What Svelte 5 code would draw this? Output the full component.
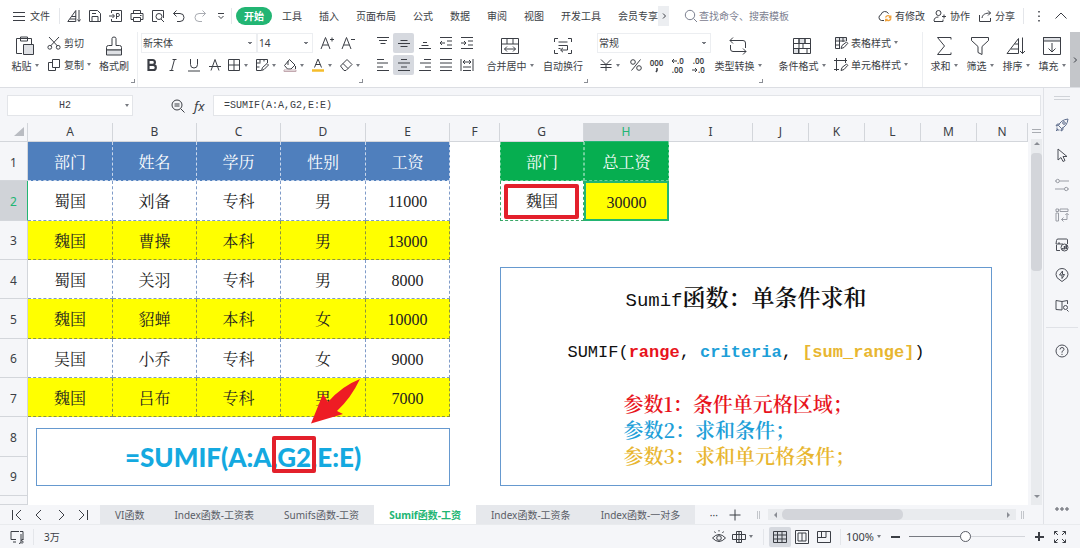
<script lang="ts">
	// name: [box size, svg body]
	const icons: Record<string, [number, string]> = {
		menu: [14, '<path d="M1 3.5h12M1 7.5h12M1 11.5h12"/>'],
		sortDoc: [14, '<path d="M.8 12.5h8V1.5zM5 7.5h4M3 10h6M12 1v11M10.5 10.5l1.5 2 1.5-2"/>'],
		save: [14, '<path d="M1.5 1.5h8l3 3v8h-11zM4 12.5v-5h6v5M4 4.5h4"/>'],
		exportDoc: [14, '<path d="M2.5 4V1.5h10v11h-10V10M0 7h5M3.5 5L5.5 7l-2 2M7.5 10V4.500h2.200q1.500 1.500 0 3H7.500"/>'],
		print: [14, '<path d="M3.500 4V1.500h7V4M3.500 10.500h-2.500V4.500h12v6h-2.500M3.500 8.500h7v4h-7zM10 6.500h1.500"/>'],
		preview: [14, '<path d="M6 12.500H1.500v-11h11V9M13 13l-3-3"/><circle cx="8" cy="7.500" r="3"/>'],
		undo: [14, '<path d="M4.500 1.500L1.500 4.500l3 3M1.500 4.500H8a4 4 0 0 1 0 8H5"/>'],
		redo: [14, '<path stroke="#a9acb2" d="M9.500 1.500l3 3-3 3M12.500 4.500H6a4 4 0 0 0 0 8h3"/>'],
		more: [14, '<path d="M4 4.500h6M4.500 7L7 9.500 9.500 7"/>'],
		search: [14, '<circle cx="6" cy="6" r="4.700"/><path d="M9.500 9.500L13 13"/>'],
		cloud: [14, '<path d="M6 11.500H3.500a3 3 0 0 1-.5-5.800 4 4 0 0 1 7.500-1"/><path stroke="#f0a13a" stroke-width="1.300" d="M7.500 8.500a2.800 2.800 0 0 1 5-.5M13 9.500a2.800 2.800 0 0 1-5 .8M12.800 6.500v2h-2M7.700 12.500v-2h2"/>'],
		person: [14, '<circle cx="5.500" cy="4" r="2.500"/><path d="M1 12c0-3 2-4 4.500-4M1 12.500h9v-2M9 7.500h4M11 5.500v4"/>'],
		share: [14, '<path d="M1.500 6v6.500h11V9M4 9c.5-3.500 3-5 8.500-5M10 1.500L12.500 4 10 6.500"/>'],
		dots: [14, '<path stroke-width="1.500" d="M7 2v1.500M7 6.500V8M7 11v1.500"/>'],
		up: [14, '<path d="M1.500 9.500L7 4l5.500 5.500"/>'],
		chevRight: [8, '<path d="M3 1.500L5.500 4 3 6.500"/>'],
		paste: [20, '<path d="M7 17.500H1.500v-15h15V8M5.500 1h7v4h-7z"/><path fill="#dfe1e5" d="M8.500 8.500h10v10h-10z"/>'],
		cut: [14, '<path d="M2 1l8.500 9M12 1L3.500 10"/><circle cx="2.800" cy="11.300" r="1.900"/><circle cx="11.200" cy="11.300" r="1.900"/>'],
		copy: [14, '<path d="M5.500 1.500h7v8h-7zM5.500 4.500h-4v8h7v-3"/>'],
		brush: [20, '<path d="M8 9.500V2.500q0-1.500 2-1.500t2 1.500v7M8 9.500H4.500q-2 0-2 2V14h15v-2.500q0-2-2-2H12"/><path fill="#dfe1e5" d="M2.500 14h15v5h-15z"/>'],
		fontUp: [14, '<path d="M1 13L5.500 1.500 10 13M2.700 9h5.600M10 3.500h4M12 1.500v4"/>'],
		fontDown: [14, '<path d="M1 13L5.500 1.500 10 13M2.700 9h5.600M10 3.500h4"/>'],
		bold: [14, '<path stroke-width="2.200" d="M3.500 2h4a2.300 2.300 0 0 1 0 4.800h-4zM3.500 6.800h4.700a2.500 2.500 0 0 1 0 5.200H3.500z"/>'],
		italic: [14, '<path d="M6.500 1.500h4M3.500 12.500h4M8.500 1.500l-3 11"/>'],
		underline: [14, '<path d="M3.500 1v5.500a3.500 3.500 0 0 0 7 0V1M1 13h12"/>'],
		strike: [14, '<path d="M3 12.500L7 1.500l4 11M1 8.500h12"/>'],
		border: [14, '<path d="M1.500 1.500h11v11h-11zM7 1.500v11M1.500 7h11"/>'],
		cellPen: [14, '<path d="M6 12.500H1.500v-11h11V5M1.500 5h4M1.500 9h3M5 1.500v3M9 1.500v2M6.500 12.500l1-3L12 5.500l1.500 1.500-4.500 4.500z"/>'],
		fill: [14, '<path d="M6.500 1.500l5.500 5.500-4 4H4.500L1.500 7.500zM5 3v4M12.500 8v3"/><path fill="#fff" stroke="#c3a9b0" d="M1 12h12v1.500H1z"/>'],
		fontColor: [14, '<path d="M3.500 9.500L7 1l3.500 8.500M4.700 6.500h4.600"/><path stroke="#f5bd2c" stroke-width="2.500" d="M1 12.500h12"/>'],
		eraser: [14, '<path d="M1.500 8L8 1.500 13 6.500l-6 6H5zM4 5.500l5 5"/>'],
		top: [14, '<path d="M1 1.500h12M3 4.500h8M4.500 7.500h5"/>'],
		middle: [14, '<path d="M3.500 4.500h7M1 7.500h12M3.500 10.500h7"/>'],
		bottom: [14, '<path d="M5 6.500h4M3.500 9.500h7M1 12.500h12"/>'],
		indentLess: [14, '<path d="M1 1.500h12M8 5h5M8 9h5M1 12.500h12M6 7H1M3 5L1 7l2 2"/>'],
		indentMore: [14, '<path d="M1 1.500h12M8 5h5M8 9h5M1 12.500h12M1 7h5M4 5l2 2-2 2"/>'],
		left: [14, '<path d="M1 1.500h7M1 5h11M1 9h6M1 12.500h12"/>'],
		center: [14, '<path d="M4 1.500h6M1 5h12M4 9h6M1 12.500h12"/>'],
		right: [14, '<path d="M6 1.500h7M2 5h11M7 9h6M1 12.500h12"/>'],
		justify: [14, '<path d="M1 1.500h12M1 5h12M1 9h12M1 12.500h12"/>'],
		distribute: [14, '<path d="M1 1v12M13 1v12M3 4h8M5 2L3 4l2 2M9 2l2 2-2 2M3 9h8M3 12.500h8"/>'],
		merge: [20, '<path d="M1.500 2.500h17v15h-17zM1.500 8h17M7 2.500V8M13 2.500V8M4.500 13h11M7 10.500L4.500 13 7 15.500M13 10.500l2.500 2.500-2.500 2.500"/>'],
		wrap: [20, '<path d="M5 2.500H1.500V6M15 2.500h3.500V6M5 17.500H1.500V14M15 17.500h3.500V14M5.500 6h9M5.500 9.500h9V14H8M10 11.800L7.500 14l2.500 2.200M5.500 12.500h2"/>'],
		yen: [14, '<path d="M2 1.500l5 5 5-5M1.500 6.500h11M1.500 9.500h11M7 6.500v6.500"/>'],
		percent: [14, '<circle cx="4" cy="4" r="2.300"/><circle cx="10" cy="10" r="2.300"/><path d="M11.500 1.500l-9 11"/>'],
		convert: [20, '<path d="M2 4.500h13q2.500 0 2.500 2.500v5M5 1.500l-3 3 3 3M18 15.500H5q-2.500 0-2.500-2.500V9M15 12.500l3 3-3 3"/>'],
		condition: [20, '<path fill="#dfe1e5" d="M7 2.500h6v5H7zM1.500 12.500h5v5h-5z"/><path d="M1.500 2.500h17v15h-17zM1.500 7.500h17M1.500 12.500h17M7 2.500v15M13 2.500v5M11 7.500v5M15 12.500v5"/>'],
		tableStyle: [14, '<path fill="#dfe1e5" stroke="none" d="M1 1h11v3H1z"/><path d="M6 12.500H1.500v-11h11V5M1.500 5h10M1.500 9H6M5.500 1.500v11M9 1.500V6M7 12.500l1-3 4.500-3.500 1.300 1.300L10 11.500z"/>'],
		cellStyle: [14, '<path d="M2.500 0v13M0 2.500h13M11.500 0v5M0 11.500h5M7 12.500l1-3 4.500-3.500 1.300 1.300L10 11.500z"/>'],
		sum: [20, '<path d="M17 3.500v-2H3.500l7 8.500-7 8.500H17v-2"/>'],
		filter: [20, '<path d="M1.500 1.500h17v3l-6.500 6v8l-4-2v-6l-6.500-6z"/>'],
		sort: [20, '<path d="M1 17.500h11.500V2.500zM8.500 8h4M5 13h7.500M16.500 1.500v16M14 15l2.500 2.500L19 15"/>'],
		fillDown: [20, '<path fill="#dfe1e5" d="M1.500 1.500h17v3.500h-17z"/><path d="M1.500 1.500h17v17h-17zM10 7v9M6.500 12.500L10 16l3.500-3.500"/>'],
		zoomOut: [14, '<circle cx="6" cy="6" r="5"/><path d="M3.500 5h5M3.500 7h5M9.800 9.800L13.500 13.500"/>'],
		rocket: [14, '<path d="M5 9L3.500 7.500C5 4 8 1.500 13 1c-.5 5-3 8-6.500 9.500zM4.500 6L2 6.200 1 8l2.500-.5M8 9.500L7.800 12 6 13l.5-2.500M2 9.500v2.500h2.500M1 13l2-2"/><circle cx="9" cy="5" r="1.300"/>'],
		cursor: [14, '<path d="M3 1l9 7.500H8L10 12.500l-2 1-2-4-3 2.500z"/>'],
		sliders: [14, '<path d="M0 3h1M4.500 3H14M0 11h9.500M13 11h1"/><circle cx="2.700" cy="3" r="1.700"/><circle cx="11.200" cy="11" r="1.700"/>'],
		pivot: [14, '<path d="M1 1h2.500v2.500H1zM5 1h8v2.500H5zM1 5h2.500v8H1zM12 5.500v6H6.500M8.500 9.500l-2 2 2 2M10.300 7L12 5.300 13.700 7"/>'],
		shop: [14, '<path d="M5 12.500H1.500V7M12.500 6V2q0-1-1-1H3Q1.500 1 1.500 2.500L1 6h3V4.500V6h4"/><circle cx="9.500" cy="9.500" r="3.500"/><path d="M9.500 8v3.500M11.300 7v4M7.800 10v1.500" stroke-width="1.500"/>'],
		idea: [14, '<path d="M5 12Q1 10 1 6.500a6 6 0 0 1 12 0Q13 10 9 12l-2 1.500zM7.500 3L4.500 7H7v3.500l2.500-4H7.500z"/>'],
		book: [14, '<path d="M7 12L1 11.500v-9L7 3.500l5.500-1V6M7 3.500V12M12 12l1.500 1.500"/><circle cx="10.500" cy="9.500" r="2"/>'],
		help: [14, '<circle cx="7" cy="7" r="6"/><path d="M5 5.500q0-2 2-2t2 1.800Q9 6.500 7 7.500v1.200M7 9.800V11"/>'],
		ellipsis: [14, '<circle cx="2" cy="7" r="1.200"/><circle cx="7" cy="7" r="1.200"/><circle cx="12" cy="7" r="1.200"/>'],
		first: [14, '<path d="M2.500 2v10M11 2L6 7l5 5"/>'],
		prev: [14, '<path d="M9 2L4 7l5 5"/>'],
		next: [14, '<path d="M5 2l5 5-5 5"/>'],
		last: [14, '<path d="M11.500 2v10M3 2l5 5-5 5"/>'],
		plus: [14, '<path d="M7 1.500v11M1.500 7h11"/>'],
		macro: [14, '<path d="M6 9.500H1v-8h8M3 12h3M10 1.500h3v8M11 4v8q0 1.500-2 1.500M13.500 9.500q-2.500-.5-2 1.200 2 .5 1.700 1.700-.7 1-2 .5"/>'],
		eye: [14, '<path d="M.5 8q6.500-7 13 0-6.500 7-13 0zM7 0v1.500M2.500 1.500l1 1.500M11.500 1.500l-1 1.500"/><circle cx="7" cy="8" r="2.300"/>'],
		cross: [14, '<path d="M4.500 1.500h5v11h-5zM.5 4.500h13v5H.5zM7 1.500v11"/>'],
		grid: [14, '<path d="M.5 1.500h13v11H.5zM.5 5h13M.5 9h13M4.500 1.500v11M9 1.500v11"/>'],
		page: [14, '<path d="M.5 .5h13v13H.5zM3 3h8v8H3zM7 3v8"/>'],
		layout: [14, '<path d="M.5 1.500h13v11H.5zM4.500 1.500v6M9 1.500v6M.5 7.500H9"/>'],
		full: [14, '<path d="M9 5l3.500-3.500M9.500 1.500h3v3M5 9l-3.500 3.500M1.500 9.500v3h3M5 5L1.500 1.500M1.500 4.500v-3h3M9 9l3.500 3.500M12.500 9.500v3h-3"/>'],
		comma: [6, '<path stroke-width="1.500" d="M3 1v2.500L2 5"/>'],
		arrowLeft: [6, '<path d="M6 3H1M3 1L1 3l2 2"/>'],
		arrowRight: [6, '<path d="M0 3h5M3 1l2 2-2 2"/>']
	};

	const quick = ['sortDoc', 'save', 'exportDoc', 'print', 'preview', 'undo', 'redo', 'more'];
	const menus = ['工具', '插入', '页面布局', '公式', '数据', '审阅', '视图', '开发工具', '会员专享'];
	const aligns = ['top', 'middle', 'bottom', 'indentLess', 'indentMore', 'left', 'center', 'right', 'justify', 'distribute'];
	const side = ['rocket', 'cursor', 'sliders', 'pivot', 'shop', 'idea', 'book'];
	const columns = 'ABCDEFGHIJKLMN'.split('');
	const rows = [
		['部门', '姓名', '学历', '性别', '工资'],
		['蜀国', '刘备', '专科', '男', '11000'],
		['魏国', '曹操', '本科', '男', '13000'],
		['蜀国', '关羽', '专科', '男', '8000'],
		['魏国', '貂蝉', '本科', '女', '10000'],
		['吴国', '小乔', '专科', '女', '9000'],
		['魏国', '吕布', '专科', '男', '7000'],
		[],
		[]
	];
	const lookup = [
		['部门', '总工资'],
		['魏国', '30000']
	];
	const sheets = ['VI函数', 'Index函数-工资表', 'Sumifs函数-工资', 'Sumif函数-工资', 'Index函数-工资条', 'Index函数-一对多'];

	let formula = $state('=SUMIF(A:A,G2,E:E)');
	let cellName = $state('H2');
	let activeSheet = $state(3);
	let zoom = $state(49);

	function cellText(r: number, c: number) {
		if (c < 5) return rows[r][c] ?? '';
		if (c === 6 || c === 7) return lookup[r]?.[c - 6] ?? '';
		return '';
	}

	function cellClass(r: number, c: number) {
		if (c < 5 && r < 7) return r === 0 ? 'data head' : r % 2 === 0 ? 'data mark' : 'data';
		if ((c === 6 || c === 7) && r < 2) {
			if (r === 0) return 'look look-head';
			return c === 7 ? 'look selected' : 'look';
		}
		return '';
	}
</script>

{#snippet icon(name: string)}
	<svg
		class="icon"
		width={icons[name][0]}
		height={icons[name][0]}
		viewBox="0 0 {icons[name][0]} {icons[name][0]}"
		aria-hidden="true">{@html icons[name][1]}</svg
	>
{/snippet}

{#snippet big(name: string, label: string, caret: boolean)}
	<button class="big" type="button">
		{@render icon(name)}
		<span class="label">{label}{#if caret}<i class="caret"></i>{/if}</span>
	</button>
{/snippet}

{#snippet small(name: string, label: string, caret: boolean)}
	<button class="small" type="button">
		{@render icon(name)}
		<span class="label">{label}{#if caret}<i class="caret"></i>{/if}</span>
	</button>
{/snippet}

{#snippet tool(name: string)}
	<button class="tool" type="button" aria-label={name}>{@render icon(name)}</button>
{/snippet}

{#snippet drop(name: string)}
	<button class="drop" type="button" aria-label={name}>{@render icon(name)}<i class="caret"></i></button>
{/snippet}

<div class="app">
	<header>
		<div class="menubar">
			<button class="file" type="button">{@render icon('menu')}文件</button>
			<span class="rule"></span>
			<div class="quick">
				{#each quick as name}
					{@render tool(name)}
				{/each}
			</div>
			<span class="rule"></span>
			<nav class="menus">
				<button class="pill" type="button">开始</button>
				{#each menus as label}
					<button type="button">{label}</button>
				{/each}
				<button class="menu-next" type="button" aria-label="next">{@render icon('chevRight')}</button>
			</nav>
			<label class="search">
				{@render icon('search')}
				<input type="text" placeholder="查找命令、搜索模板" aria-label="查找命令、搜索模板" />
			</label>
			<div class="account">
				<button type="button">{@render icon('cloud')}有修改</button>
				<button type="button">{@render icon('person')}协作</button>
				<button type="button">{@render icon('share')}分享</button>
				<span class="rule"></span>
				<button type="button" aria-label="more">{@render icon('dots')}</button>
				<button type="button" aria-label="collapse">{@render icon('up')}</button>
			</div>
		</div>

		<div class="ribbon">
			<div class="group clipboard corner">
				{@render big('paste', '粘贴', true)}
				<div class="stack">
					{@render small('cut', '剪切', false)}
					{@render small('copy', '复制', true)}
				</div>
				{@render big('brush', '格式刷', false)}
			</div>
			<div class="group font corner">
				<div class="stack">
					<div class="line">
						<select class="family" aria-label="font"><option>新宋体</option></select>
						<select class="size" aria-label="size"><option>14</option></select>
						{@render tool('fontUp')}
						{@render tool('fontDown')}
					</div>
					<div class="line">
						{@render tool('bold')}
						{@render tool('italic')}
						{@render tool('underline')}
						{@render tool('strike')}
						{@render drop('border')}
						{@render drop('cellPen')}
						{@render drop('fill')}
						{@render drop('fontColor')}
						{@render drop('eraser')}
					</div>
				</div>
			</div>
			<div class="group align corner">
				<div class="align-grid">
					{#each aligns as name}
						<button class="tool" class:on={name === 'middle' || name === 'center'} type="button" aria-label={name}>
							{@render icon(name)}
						</button>
					{/each}
				</div>
				{@render big('merge', '合并居中', true)}
				{@render big('wrap', '自动换行', false)}
			</div>
			<div class="group number corner">
				<div class="stack">
					<div class="line">
						<select class="format" aria-label="format"><option>常规</option></select>
					</div>
					<div class="line">
						{@render drop('yen')}
						{@render tool('percent')}
						<button class="tool digits" type="button">
							<span>000</span>
							{@render icon('comma')}
						</button>
						<button class="tool digits" type="button">
							<span>{@render icon('arrowLeft')}.0</span>
							<span>.00</span>
						</button>
						<button class="tool digits" type="button">
							<span>.00</span>
							<span>{@render icon('arrowRight')}.0</span>
						</button>
					</div>
				</div>
				{@render big('convert', '类型转换', true)}
			</div>
			<div class="group styles">
				{@render big('condition', '条件格式', true)}
				<div class="stack">
					{@render small('tableStyle', '表格样式', true)}
					{@render small('cellStyle', '单元格样式', true)}
				</div>
			</div>
			<div class="group edit">
				{@render big('sum', '求和', true)}
				{@render big('filter', '筛选', true)}
				{@render big('sort', '排序', true)}
				{@render big('fillDown', '填充', true)}
			</div>
			<button class="ribbon-next" type="button" aria-label="scroll ribbon">{@render icon('chevRight')}</button>
		</div>
	</header>

	<div class="body">
		<main>
			<div class="formula-bar">
				<label class="name-box">
					<input type="text" bind:value={cellName} aria-label="cell" />
					<i class="caret"></i>
				</label>
				<div class="fx">
					{@render icon('zoomOut')}
					<em>fx</em>
				</div>
				<input class="formula" type="text" bind:value={formula} aria-label="formula" />
			</div>

			<div class="sheet-row">
				<div class="sheet">
					<table>
						<colgroup>
							<col class="w-head" />
							{#each columns as letter, i}
								<col class={i === 13 ? '' : i > 8 ? 'w-narrow' : i === 5 ? 'w-gap' : i === 0 || i === 3 || i === 7 ? 'w-wide' : 'w-col'} />
							{/each}
						</colgroup>
						<thead>
							<tr>
								<th class="corner-cell"><svg width="10" height="9" aria-hidden="true"><path d="M10 0v9H0z" fill="#b9bcc2" /></svg></th>
								{#each columns as letter}
									<th class:current={letter === 'H'}>{letter}</th>
								{/each}
							</tr>
						</thead>
						<tbody>
							{#each rows as _, r}
								<tr>
									<th class:current={r === 1}>{r + 1}</th>
									{#each columns as _, c}
										<td class={cellClass(r, c)}>{cellText(r, c)}</td>
									{/each}
								</tr>
							{/each}
							<tr class="rest"><th></th><td colspan="14"></td></tr>
						</tbody>
					</table>

					<div class="shape formula-shape">=SUMIF(A:A,G2,E:E)</div>
					<div class="shape note">
						<h2><span>Sumif</span>函数：单条件求和</h2>
						<p>SUMIF(<b class="red">range</b>, <b class="blue">criteria</b>, <b class="gold">[sum_range]</b>)</p>
						<ul>
							<li class="red">参数1：条件单元格区域；</li>
							<li class="blue">参数2：求和条件；</li>
							<li class="gold">参数3：求和单元格条件；</li>
						</ul>
					</div>
					<div class="frame frame-cell"></div>
					<div class="frame frame-arg"></div>
					<svg class="arrow" width="52" height="46" viewBox="0 0 52 46" aria-hidden="true">
						<path fill="#ee1c24" d="M50 1Q41 20 27 33l6 3L1 45.500 13 16l5 8Q32 8 50 1z" />
					</svg>
				</div>
				<div class="v-scroll">
					<div class="split"></div>
					<i class="tri tri-up"></i>
					<div class="v-thumb"></div>
					<i class="tri tri-down"></i>
				</div>
			</div>

			<div class="tabs">
				<div class="tab-nav">
					{@render tool('first')}
					{@render tool('prev')}
					{@render tool('next')}
					{@render tool('last')}
				</div>
				<div class="tab-list">
					{#each sheets as name, i}
						<button type="button" class:active={i === activeSheet} onclick={() => (activeSheet = i)}>{name}</button>
					{/each}
				</div>
				<div class="tab-tools">
					<button class="tool" type="button" aria-label="more sheets">···</button>
					{@render tool('plus')}
				</div>
				<span class="grip"></span>
				<div class="h-scroll">
					<i class="tri tri-left"></i>
					<div class="h-thumb"></div>
					<i class="tri tri-right"></i>
				</div>
				<span class="grip"></span>
			</div>
		</main>

		<aside>
			<div class="handle"></div>
			{#each side as name}
				<button class="side-button {name}" type="button" aria-label={name}>{@render icon(name)}</button>
			{/each}
			<hr />
			<button class="side-button" type="button" aria-label="help">{@render icon('help')}</button>
			<button class="side-button side-more" type="button" aria-label="more panels">{@render icon('ellipsis')}</button>
		</aside>
	</div>

	<footer>
		{@render tool('macro')}
		<span class="rule"></span>
		<span class="total">3万</span>
		<div class="status-tools">
			{@render tool('eye')}
			{@render drop('cross')}
			<span class="rule"></span>
			<button class="tool on" type="button" aria-label="grid view">{@render icon('grid')}</button>
			{@render tool('page')}
			{@render tool('layout')}
			<span class="rule"></span>
			<button class="zoom-value" type="button">100%<i class="caret"></i></button>
			<button class="zoom-step" type="button" aria-label="zoom out"><i class="minus"></i></button>
			<input type="range" min="0" max="100" bind:value={zoom} aria-label="zoom" />
			<button class="zoom-step zoom-in" type="button" aria-label="zoom in"><i class="minus plus"></i></button>
			{@render tool('full')}
		</div>
	</footer>
</div>

<style>
	:global(body) {
		margin: 0;
	}

	.app {
		display: flex;
		flex-direction: column;
		min-height: 100vh;
		overflow: hidden;
		background: #f5f6f9;
		color: #3b3e45;
		font-family: 'Noto Sans', 'Noto Sans CJK SC', sans-serif;
		font-size: 10px;
		line-height: 14px;
	}

	button,
	input,
	select {
		margin: 0;
		padding: 0;
		border: 0;
		background: none;
		color: inherit;
		font: inherit;
		outline: none;
	}

	button {
		display: flex;
		align-items: center;
		justify-content: center;
		white-space: nowrap;
	}

	.icon {
		display: block;
		flex: none;
		fill: none;
		stroke: currentColor;
		stroke-width: 1;
		overflow: visible;
	}

	.caret {
		display: inline-block;
		flex: none;
		margin-left: 3px;
		vertical-align: 3px;
		border: 2px solid transparent;
		border-top: 3px solid #777a81;
		border-bottom: 0;
	}

	.rule {
		width: 1px;
		height: 16px;
		background: #e4e6ea;
	}

	header {
		background: #fff;
		border-bottom: 1px solid #dcdee3;
	}

	.menubar {
		display: flex;
		align-items: center;
		height: 32px;
		padding: 0 12px;
	}

	.file {
		gap: 4px;
		margin-right: 9px;
	}

	.quick {
		display: flex;
		margin: 0 0 0 3px;
	}

	.tool {
		width: 21px;
		height: 20px;
		border-radius: 2px;
	}

	.on {
		background: #d6d9df;
	}

	.menus {
		display: flex;
		align-items: center;
		gap: 17px;
	}

	.pill {
		height: 18px;
		margin: 0 -7px 0 4px;
		padding: 0 8px;
		border-radius: 9px;
		background: #22b573;
		color: #fff;
		font-weight: 700;
	}

	.menu-next {
		width: 11px;
		height: 20px;
		margin-left: -17px;
		background: #eceef1;
	}

	.search {
		display: flex;
		flex: 1;
		align-items: center;
		gap: 1px;
		margin-left: 15px;
		color: #7c8090;
	}

	.search input {
		width: 110px;
	}

	.search input::placeholder {
		color: #7c8090;
		opacity: 1;
	}

	.account,
	.account button {
		display: flex;
		align-items: center;
	}

	.account {
		gap: 8px;
	}

	.account button {
		gap: 3px;
	}

	.ribbon {
		display: flex;
		height: 55px;
	}

	.group {
		position: relative;
		display: flex;
		flex: none;
		align-items: flex-start;
	}

	.corner::after {
		content: '';
		position: absolute;
		right: 2px;
		bottom: 4px;
		width: 3px;
		height: 3px;
		border: solid #8a8d94;
		border-width: 0 1px 1px 0;
	}

	.clipboard {
		padding: 0 4px 0 3px;
		border-right: 1px solid #eceef1;
	}

	.font {
		padding: 0 0 0 3px;
	}

	.align {
		padding-left: 7px;
	}

	.number {
		padding-left: 7px;
	}

	.styles {
		padding: 0 4px 0 10px;
		border-right: 1px solid #eceef1;
	}

	.edit {
		padding-left: 3px;
	}

	.big {
		flex-direction: column;
		gap: 3px;
		width: 54px;
		padding-top: 4px;
	}

	.clipboard .big {
		width: 44px;
	}

	.clipboard .big:last-child {
		width: 38px;
	}

	.edit .big {
		width: 36px;
	}

	.stack {
		display: flex;
		flex-direction: column;
		gap: 2px;
		padding-top: 1px;
	}

	.clipboard .stack {
		width: 48px;
	}

	.styles .stack {
		width: 84px;
		padding-left: 5px;
	}

	.small {
		justify-content: flex-start;
		gap: 3px;
		height: 20px;
	}

	.line {
		display: flex;
		align-items: center;
		height: 20px;
	}

	select {
		box-sizing: border-box;
		height: 20px;
		padding: 0 1px;
		border: 1px solid #eceef1;
		appearance: none;
		background:
			linear-gradient(45deg, transparent 50%, #777a81 50%) right 6px center / 2px 3px no-repeat,
			linear-gradient(135deg, #777a81 50%, transparent 50%) right 4px center / 2px 3px no-repeat,
			#fff;
	}

	.family {
		width: 116px;
	}

	.size {
		width: 56px;
		margin-right: 3px;
	}

	.format {
		width: 114px;
	}

	.drop {
		justify-content: flex-start;
		width: 28px;
		height: 20px;
		padding-left: 2px;
	}

	.align-grid {
		display: grid;
		grid-template-columns: repeat(5, 21px);
		gap: 2px 0;
		padding: 1px 6px 0 0;
	}

	.align .big + .big {
		margin-left: -1px;
	}

	.digits {
		flex-direction: column;
		font-size: 8px;
		font-weight: 600;
		line-height: 9px;
	}

	.digits span {
		display: flex;
		align-items: center;
	}

	.ribbon-next {
		width: 11px;
		margin-left: auto;
		background: #c4c6ca;
	}

	.body {
		display: flex;
		flex: 1;
	}

	main {
		display: flex;
		flex: 1;
		flex-direction: column;
		min-width: 0;
	}

	.formula-bar {
		display: flex;
		align-items: center;
		height: 35px;
		padding: 0 2px 0 7px;
		font-family: 'Liberation Mono', monospace;
	}

	.name-box,
	.formula {
		box-sizing: border-box;
		height: 21px;
		border: 1px solid #e3e5e9;
		background: #fff;
	}

	.name-box {
		display: flex;
		align-items: center;
		width: 126px;
	}

	.name-box input {
		width: 114px;
		text-align: center;
	}

	.fx {
		display: flex;
		align-items: center;
		gap: 9px;
		width: 42px;
		padding-left: 38px;
	}

	.fx em {
		font-family: 'Noto Sans', sans-serif;
		font-size: 13px;
	}

	.formula {
		flex: 1;
		min-width: 0;
		padding: 0 10px;
	}

	.sheet-row {
		display: flex;
		flex: 1;
		background: #fff;
	}

	.sheet {
		position: relative;
		flex: 1;
		min-width: 0;
		overflow: hidden;
	}

	table {
		width: 100%;
		height: 382px;
		table-layout: fixed;
		border-collapse: separate;
		border-spacing: 0;
	}

	.w-head {
		width: 28px;
	}

	.w-col {
		width: 84px;
	}

	.w-wide {
		width: 85px;
	}

	.w-gap {
		width: 50px;
	}

	.w-narrow {
		width: 56px;
	}

	th,
	td {
		box-sizing: border-box;
		padding: 0;
		text-align: center;
		white-space: nowrap;
	}

	th {
		border: solid #d3d6db;
		border-width: 0 1px 1px 0;
		background: #f5f6f9;
		color: #3b3e45;
		font-size: 12px;
		font-weight: 400;
	}

	thead th {
		height: 19px;
	}

	tbody th {
		padding-top: 3px;
	}

	.corner-cell {
		padding-right: 3px;
		text-align: right;
	}

	th.current {
		background: #d0d3d8;
		color: #22b573;
	}

	tbody th.current {
		border-right-color: #22b573;
	}

	thead th.current {
		border-bottom-color: #22b573;
	}

	td {
		height: 39px;
		padding-top: 4px;
		font-family: 'Liberation Serif', 'Noto Serif CJK SC', 'Noto Sans CJK SC', serif;
		font-size: 16px;
		line-height: 20px;
		color: #222;
	}

	.rest th,
	.rest td {
		height: 9px;
		padding: 0;
	}

	.data {
		border: dashed #7f9bc8;
		border-width: 0 1px 1px 0;
	}

	.head {
		border-color: #c9d7ec;
		background: #4f7fbd;
		color: #fff;
	}

	.mark {
		border-color: #8b9440;
		background: #ff0;
	}

	.look {
		border: dashed #3aa868;
		border-width: 0 1px 1px;
	}

	.look-head {
		border-color: #6fd09b;
		background: #06ae50;
		color: #fff;
	}

	.selected {
		border: 2px solid #22b573;
		background: #ff0;
	}

	/* drawings placed over the cells */
	.shape,
	.frame,
	.arrow {
		position: absolute;
		box-sizing: border-box;
	}

	.shape {
		border: 1px solid #6699cf;
		background: #fff;
	}

	.formula-shape {
		top: 305px;
		left: 36px;
		display: grid;
		place-items: center;
		width: 414px;
		height: 58px;
		color: #14a9e0;
		font-family: Lato, sans-serif;
		font-size: 26px;
		font-weight: 900;
	}

	.note {
		top: 144px;
		left: 500px;
		display: flex;
		flex-direction: column;
		align-items: center;
		width: 492px;
		height: 219px;
		padding-top: 16px;
		color: #111;
		font-family: 'Noto Serif CJK SC', 'Noto Sans CJK SC', serif;
		line-height: 26px;
	}

	.note h2,
	.note p,
	.note ul {
		margin: 0;
		padding: 0;
		list-style: none;
	}

	.note h2 {
		height: 26px;
		font-size: 23px;
		font-weight: 600;
	}

	.note h2 span,
	.note p {
		font-family: 'Liberation Mono', monospace;
	}

	.note h2 span {
		font-size: 19px;
		font-weight: 400;
		line-height: 20px;
	}

	.note p {
		margin: 30px 0 25px;
		font-size: 17px;
	}

	.note ul {
		width: 50%;
		font-size: 20px;
		font-weight: 600;
		white-space: nowrap;
	}

	.red {
		color: #e8141c;
	}

	.blue {
		color: #1e9fd8;
	}

	.gold {
		color: #e8b630;
	}

	.frame {
		border: 4px solid #e3202b;
		border-radius: 2px;
	}

	.frame-cell {
		top: 61px;
		left: 504px;
		width: 75px;
		height: 35px;
	}

	.frame-arg {
		top: 313px;
		left: 272px;
		width: 44px;
		height: 37px;
	}

	.arrow {
		top: 255px;
		left: 310px;
	}

	.v-scroll {
		display: flex;
		flex-direction: column;
		align-items: center;
		width: 11px;
		padding-bottom: 4px;
		border: solid #f5f6f9;
		border-width: 0 1px 0 3px;
		background: #e9ebee;
	}

	.split {
		box-sizing: border-box;
		width: 11px;
		height: 16px;
		border-top: 5px solid #f5f6f9;
		background:
			linear-gradient(#a9acb2, #a9acb2) center 1px / 9px 1px no-repeat,
			linear-gradient(#a9acb2, #a9acb2) center 4px / 9px 1px no-repeat,
			#f5f6f9;
	}

	.tri {
		flex: none;
		border: 3px solid transparent;
	}

	.tri-up {
		margin-bottom: 8px;
		border-bottom-color: #8a8d94;
	}

	.tri-down {
		margin-top: auto;
		border-top-color: #8a8d94;
	}

	.tri-left {
		border-right-color: #8a8d94;
	}

	.tri-right {
		margin-left: auto;
		border-left-color: #8a8d94;
	}

	.v-thumb {
		width: 11px;
		height: 118px;
		border-radius: 4px;
		background: #d3d5da;
	}

	.tabs {
		display: flex;
		align-items: center;
		height: 19px;
	}

	.tab-nav {
		display: flex;
		gap: 1px;
		width: 94px;
		padding-left: 6px;
	}

	.tab-list {
		display: flex;
		background: #e6e8ec;
	}

	.tab-list button {
		height: 19px;
		padding: 0 15px;
		color: #5a5d66;
	}

	.tab-list .active {
		background: #fff;
		color: #22b573;
		font-weight: 700;
	}

	.tab-tools {
		display: flex;
		margin: 0 12px 0 8px;
	}

	.grip {
		box-sizing: border-box;
		width: 3px;
		height: 8px;
		border: solid #c3c6cb;
		border-width: 0 1px;
	}

	.h-scroll {
		display: flex;
		flex: 1;
		align-items: center;
		height: 11px;
		margin: 0 5px 0 8px;
		padding: 0 3px;
		background: #e9ebee;
	}

	.h-thumb {
		width: 50%;
		height: 11px;
		margin-left: 5px;
		border-radius: 5px;
		background: #d3d5da;
	}

	.tabs > .grip:last-child {
		margin-right: 19px;
	}

	aside {
		display: flex;
		flex-direction: column;
		align-items: center;
		width: 36px;
		border-left: 1px solid #e0e2e7;
	}

	.handle {
		width: 16px;
		height: 2px;
		margin: 8px 0 10px;
		border: solid #d0d3d8;
		border-width: 1px 0;
	}

	.side-button {
		width: 36px;
		height: 30px;
		color: #4b4e57;
	}

	.rocket {
		color: #5e6d8c;
	}

	.sliders,
	.pivot {
		color: #9a9da5;
	}

	hr {
		width: 32px;
		height: 1px;
		margin: 7px 0 8px;
		border: 0;
		background: #e0e2e7;
	}

	.side-more {
		margin-top: auto;
	}

	footer {
		display: flex;
		align-items: center;
		gap: 6px;
		height: 23px;
		padding: 0 9px 0 6px;
		border-top: 1px solid #e9ebee;
	}

	.total {
		margin-left: 4px;
	}

	.status-tools {
		display: flex;
		align-items: center;
		margin-left: auto;
	}

	.status-tools .tool {
		width: 22px;
	}

	.status-tools .rule {
		margin: 0 5px;
	}

	.zoom-value {
		font-size: 11px;
	}

	.zoom-step {
		width: 20px;
		height: 20px;
		margin: 0 4px;
	}

	.zoom-in {
		margin-right: 0;
	}

	.minus {
		width: 9px;
		height: 2px;
		background: #3b3e45;
	}

	.plus {
		width: 9px;
		height: 9px;
		background:
			linear-gradient(#3b3e45, #3b3e45) center / 9px 2px no-repeat,
			linear-gradient(#3b3e45, #3b3e45) center / 2px 9px no-repeat;
	}

	input[type='range'] {
		width: 116px;
		height: 12px;
		appearance: none;
		background: linear-gradient(90deg, #777a81 50%, #d3d5da 50%) center / 100% 1px no-repeat;
	}

	input[type='range']::-webkit-slider-thumb {
		width: 11px;
		height: 11px;
		border: 1px solid #5a5d66;
		border-radius: 50%;
		appearance: none;
		background: #fff;
	}
</style>
